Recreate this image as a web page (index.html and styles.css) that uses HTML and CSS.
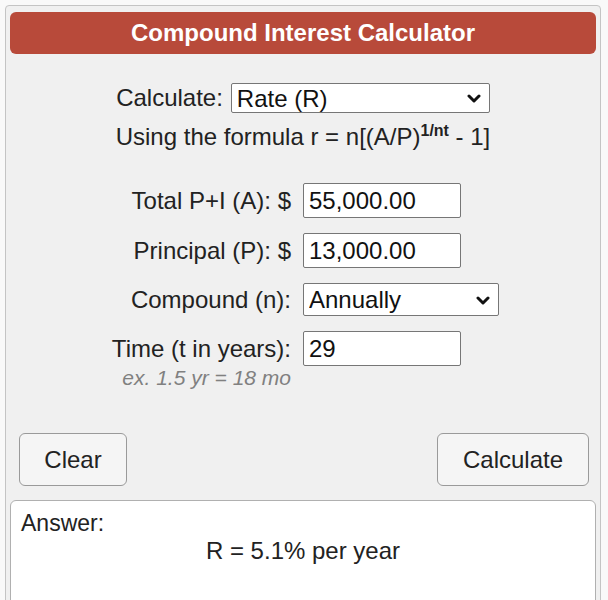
FILE: index.html
```html
<!DOCTYPE html>
<html>
<head>
<meta charset="utf-8">
<link rel="stylesheet" href="styles.css">
</head>
<body>
<div class="calc">
  <div class="header">Compound Interest Calculator</div>
  <div class="calc-row">
    <span class="calc-label">Calculate:</span>
    <div class="select-wrap select-top">
      <select class="sel"><option>Rate (R)</option></select>
      <svg class="chev" width="14" height="9" viewBox="0 0 14 9"><path d="M2 2 L7 7 L12 2" fill="none" stroke="#111" stroke-width="3" stroke-linecap="round" stroke-linejoin="round"/></svg>
    </div>
  </div>
  <div class="formula">Using the formula r = n[(A/P)<sup>1/nt</sup> - 1]</div>
  <div class="form">
    <label class="lbl">Total P+I (A): $</label>
    <input class="inp" type="text" value="55,000.00">
    <label class="lbl">Principal (P): $</label>
    <input class="inp" type="text" value="13,000.00">
    <label class="lbl">Compound (n):</label>
    <div class="select-wrap select-n">
      <select class="sel"><option>Annually</option></select>
      <svg class="chev" width="14" height="9" viewBox="0 0 14 9"><path d="M2 2 L7 7 L12 2" fill="none" stroke="#111" stroke-width="3" stroke-linecap="round" stroke-linejoin="round"/></svg>
    </div>
    <label class="lbl">Time (t in years):</label>
    <input class="inp" type="text" value="29">
  </div>
  <div class="hint">ex. 1.5 yr = 18 mo</div>
  <div class="buttons">
    <button class="btn btn-clear">Clear</button>
    <button class="btn btn-calc">Calculate</button>
  </div>
  <div class="answer">
    <div class="answer-label">Answer:</div>
    <div class="answer-value">R = 5.1% per year</div>
  </div>
</div>
</body>
</html>
```
FILE: styles.css
```css
html, body {
  margin: 0;
  padding: 0;
  background: #f9f9f9;
}
body {
  font-family: "Liberation Sans", Arial, sans-serif;
  color: #222;
}
.calc {
  margin: 5px 0 0 5px;
  width: 596px;
  box-sizing: border-box;
  height: 640px;
  border: 1px solid #c4c4c4;
  border-radius: 4px;
  background: #f0f0f0;
  padding: 6px 4px 0 4px;
}
.header {
  height: 42px;
  background: #b84a3a;
  border-radius: 6px;
  color: #fff;
  font-weight: bold;
  font-size: 24px;
  display: flex;
  align-items: center;
  justify-content: center;
}
.calc-row {
  margin-top: 29px;
  height: 30px;
  display: flex;
  align-items: center;
  justify-content: center;
  gap: 8px;
  font-size: 24px;
}
.select-wrap {
  position: relative;
}
.sel {
  appearance: none;
  -webkit-appearance: none;
  width: 100%;
  height: 100%;
  box-sizing: border-box;
  border: 1px solid #767676;
  border-radius: 2px;
  background: #fff;
  font-family: "Liberation Sans", Arial, sans-serif;
  font-size: 24px;
  color: #111;
  padding: 0 0 0 5px;
  margin: 0;
}
.chev {
  position: absolute;
  right: 9px;
  top: 50%;
  margin-top: -4px;
}
.select-top {
  width: 259px;
  height: 30px;
}
.select-n {
  width: 196px;
  height: 33px;
}
.formula {
  margin-top: 10px;
  line-height: 28px;
  font-size: 24px;
  text-align: center;
}
.formula sup {
  font-size: 16px;
  font-weight: bold;
  line-height: 0;
  vertical-align: 9px;
}
.form {
  margin-top: 32px;
  display: grid;
  grid-template-columns: 281px auto;
  grid-template-rows: 35px 35px 33px 35px;
  column-gap: 12px;
  row-gap: 15px;
  align-items: center;
  justify-items: start;
}
.lbl {
  justify-self: end;
  font-size: 24px;
  white-space: nowrap;
}
.inp {
  width: 158px;
  height: 35px;
  box-sizing: border-box;
  border: 1px solid #767676;
  border-radius: 2px;
  background: #fff;
  font-family: "Liberation Sans", Arial, sans-serif;
  font-size: 24px;
  color: #111;
  padding: 0 0 0 5px;
  margin: 0;
}
.hint {
  width: 281px;
  text-align: right;
  font-size: 21px;
  line-height: 22px;
  font-style: italic;
  color: #808080;
  margin-top: 1px;
}
.buttons {
  margin-top: 44px;
  display: flex;
  justify-content: space-between;
  padding: 0 7px 0 9px;
}
.btn {
  height: 53px;
  box-sizing: border-box;
  border: 1px solid #9a9a9a;
  border-radius: 6px;
  background: #f5f5f5;
  font-family: "Liberation Sans", Arial, sans-serif;
  font-size: 24px;
  color: #222;
  margin: 0;
}
.btn-clear {
  width: 108px;
}
.btn-calc {
  width: 152px;
}
.answer {
  margin-top: 14px;
  height: 140px;
  background: #fff;
  border: 1px solid #b0b0b0;
  border-radius: 6px;
  padding: 10px 10px;
  font-size: 24px;
}
.answer-label {
  line-height: 24px;
  font-size: 23px;
}
.answer-value {
  line-height: 30px;
  text-align: center;
  margin-top: 1px;
}
```
